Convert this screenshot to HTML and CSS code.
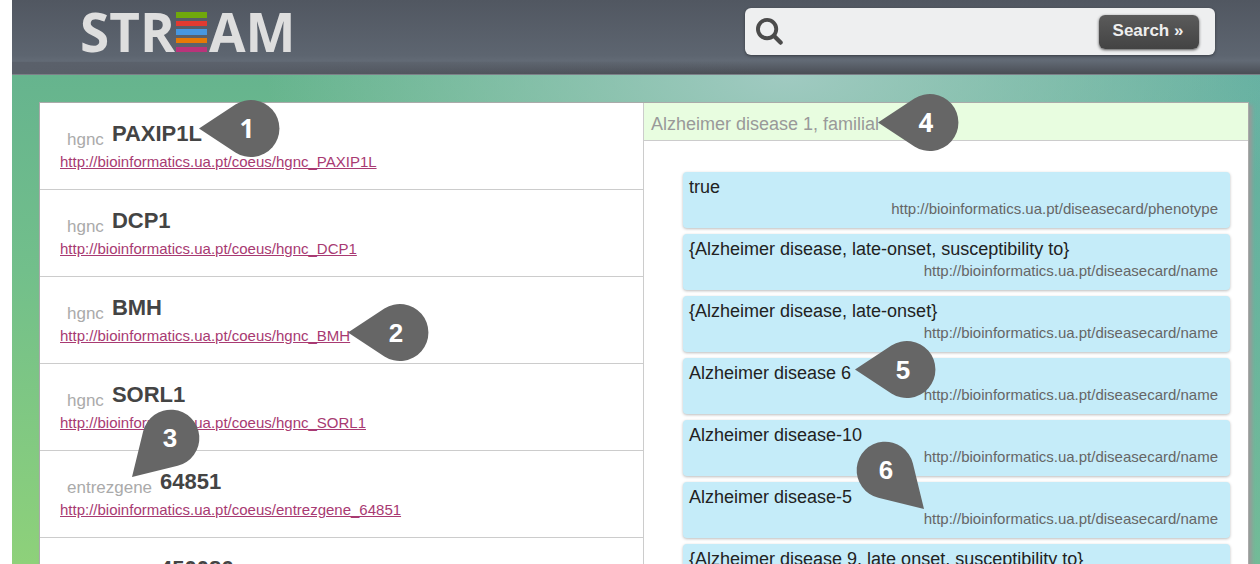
FILE: index.html
```html
<!DOCTYPE html>
<html lang="en">
<head>
<meta charset="utf-8">
<title>STREAM</title>
<link rel="stylesheet" href="styles.css">
</head>
<body>
<div class="page">
  <header class="topbar">
    <h1 class="logo" aria-label="STREAM">
      <span>STR</span>
      <svg class="logo-bars" viewBox="0 0 31 40" aria-hidden="true">
        <rect y="0" width="31" height="6" fill="#70a80c"/>
        <rect y="9" width="31" height="5" fill="#e23a31"/>
        <rect y="17" width="31" height="6" fill="#4797e0"/>
        <rect y="26" width="31" height="5" fill="#e67a06"/>
        <rect y="35" width="31" height="5" fill="#b9337a"/>
      </svg>
      <span>AM</span>
    </h1>
    <form class="search">
      <svg class="search-icon" viewBox="0 0 28 28" aria-hidden="true">
        <circle cx="11.500" cy="11.500" r="9.500" fill="none" stroke="#4b4b4b" stroke-width="4"/>
        <path d="M18.500 18.500L25.500 25.500" stroke="#4b4b4b" stroke-width="4.500" stroke-linecap="round"/>
      </svg>
      <input class="search-input" type="text" aria-label="Search">
      <button class="search-button" type="button">Search »</button>
    </form>
  </header>
  <main class="stage">
    <div class="panel">
      <ul class="genes">
        <li class="gene"><div class="gene-head"><span class="gene-type">hgnc</span><strong>PAXIP1L</strong></div><a href="#">http://bioinformatics.ua.pt/coeus/hgnc_PAXIP1L</a></li>
        <li class="gene"><div class="gene-head"><span class="gene-type">hgnc</span><strong>DCP1</strong></div><a href="#">http://bioinformatics.ua.pt/coeus/hgnc_DCP1</a></li>
        <li class="gene"><div class="gene-head"><span class="gene-type">hgnc</span><strong>BMH</strong></div><a href="#">http://bioinformatics.ua.pt/coeus/hgnc_BMH</a></li>
        <li class="gene"><div class="gene-head"><span class="gene-type">hgnc</span><strong>SORL1</strong></div><a href="#">http://bioinformatics.ua.pt/coeus/hgnc_SORL1</a></li>
        <li class="gene"><div class="gene-head"><span class="gene-type">entrezgene</span><strong>64851</strong></div><a href="#">http://bioinformatics.ua.pt/coeus/entrezgene_64851</a></li>
        <li class="gene"><div class="gene-head"><span class="gene-type">entrezgene</span><strong>450086</strong></div></li>
      </ul>
      <section class="details">
        <h2 class="details-title">Alzheimer disease 1, familial</h2>
        <ul class="cards">
          <li class="card"><span>true</span><span class="card-url">http://bioinformatics.ua.pt/diseasecard/phenotype</span></li>
          <li class="card"><span>{Alzheimer disease, late-onset, susceptibility to}</span><span class="card-url">http://bioinformatics.ua.pt/diseasecard/name</span></li>
          <li class="card"><span>{Alzheimer disease, late-onset}</span><span class="card-url">http://bioinformatics.ua.pt/diseasecard/name</span></li>
          <li class="card"><span>Alzheimer disease 6</span><span class="card-url">http://bioinformatics.ua.pt/diseasecard/name</span></li>
          <li class="card"><span>Alzheimer disease-10</span><span class="card-url">http://bioinformatics.ua.pt/diseasecard/name</span></li>
          <li class="card"><span>Alzheimer disease-5</span><span class="card-url">http://bioinformatics.ua.pt/diseasecard/name</span></li>
          <li class="card"><span>{Alzheimer disease 9, late onset, susceptibility to}</span></li>
        </ul>
      </section>
    </div>
  </main>
  <svg class="pin pin-1" viewBox="0 0 81 57"><path d="M0 28.500L36.400 4.600A28.500 28.500 0 1 1 36.400 52.400Z"/><text class="humanist" x="48" y="38">1</text></svg>
  <svg class="pin pin-2" viewBox="0 0 81 57"><path d="M0 28.500L36.400 4.600A28.500 28.500 0 1 1 36.400 52.400Z"/><text x="48" y="38">2</text></svg>
  <svg class="pin pin-3" viewBox="0 0 68 68"><path transform="translate(0 68) rotate(-45)" d="M0 0L40.200 -24.400A28.500 28.500 0 1 1 40.200 24.400Z"/><text x="38" y="38">3</text></svg>
  <svg class="pin pin-4" viewBox="0 0 81 57"><path d="M0 28.500L36.400 4.600A28.500 28.500 0 1 1 36.400 52.400Z"/><text class="humanist" x="48" y="38">4</text></svg>
  <svg class="pin pin-5" viewBox="0 0 81 57"><path d="M0 28.500L36.400 4.600A28.500 28.500 0 1 1 36.400 52.400Z"/><text x="48" y="38">5</text></svg>
  <svg class="pin pin-6" viewBox="0 0 68 68"><path transform="translate(68 68) rotate(-135)" d="M0 0L40.200 -24.400A28.500 28.500 0 1 1 40.200 24.400Z"/><text x="30" y="38">6</text></svg>
</div>
</body>
</html>
```
FILE: styles.css
```css
* { box-sizing: border-box; }

body {
  margin: 0;
  background: #fff;
  font-family: "Liberation Sans", Arial, sans-serif;
}

ul { margin: 0; padding: 0; list-style: none; }

.page {
  position: relative;
  display: flex;
  flex-direction: column;
  height: 100vh;
  padding-left: 12px;
  overflow: hidden;
}

.topbar {
  display: flex;
  flex: none;
  justify-content: space-between;
  align-items: flex-start;
  padding: 8px 45px 19px 68px;
  border-bottom: 1px solid #7c8088;
  background:
    linear-gradient(90deg, #5a606a, #5a606a00 60%) 0 100% / 100% 12px no-repeat,
    linear-gradient(#515761, #5d6570 75%, #626a75 82%, #4a4e55);
}

.logo {
  display: flex;
  align-items: center;
  margin: 0;
  color: #dedede;
  font: 700 53px/47px "Open Sans", sans-serif;
}

.logo-bars { width: 31px; height: 40px; margin: 0 2px 0 1px; }

.search {
  display: flex;
  align-items: center;
  width: 470px;
  height: 47px;
  padding: 0 16px 0 11px;
  border-radius: 6px;
  background: #eeeff0;
  box-shadow: 0 1px 3px #0006;
}

.search-icon { width: 27px; height: 27px; }

.search-input {
  flex: 1;
  min-width: 0;
  height: 32px;
  border: 0;
  background: transparent;
  font-size: 17px;
  outline: none;
}

.search-button {
  width: 100px;
  height: 34px;
  padding: 0 2px 2px 0;
  border: 0;
  border-radius: 6px;
  background: linear-gradient(#5b5b5b, #434343);
  box-shadow: 0 1px 3px #000a;
  color: #eee;
  font: bold 17px "Liberation Sans", Arial, sans-serif;
}

.stage {
  flex: 1;
  min-height: 0;
  padding: 27px 11px 0 27px;
  background:
    radial-gradient(ellipse 520px 240px at 62% 0, #a0cac1 0, #a0cac100 100%),
    linear-gradient(90deg, #60acab00 60%, #60acab99 100%),
    linear-gradient(#66b48e, #72bf8b 40%, #8ed17a);
}

.panel {
  display: grid;
  grid-template-columns: calc(50% - 1px) 1fr;
  border: 1px solid #aaa;
  background: #fff;
  box-shadow: 3px 3px 4px #999;
}

.gene {
  height: 87px;
  padding: 17px 20px 0;
  border-bottom: 1px solid #ccc;
}

.gene-head {
  display: flex;
  gap: 8px;
  padding-left: 7px;
  color: #444;
  font-size: 22px;
  line-height: 28px;
}

.gene-type {
  padding-top: 6px;
  color: #aaa;
  font-size: 17px;
}

.gene a {
  display: block;
  color: #a83a72;
  font-size: 15px;
  line-height: 16px;
}

.details { border-left: 1px solid #ccc; }

.details-title {
  margin: 0;
  padding: 6px 7px 1px;
  border-bottom: 1px solid #ccc;
  background: #e8fde0;
  color: #999;
  font-size: 18px;
  font-weight: normal;
  line-height: 30px;
}

.cards {
  display: flex;
  flex-direction: column;
  gap: 6px;
  padding: 31px 18px 0 39px;
}

.card {
  display: flex;
  flex-direction: column;
  height: 56px;
  padding: 5px 12px 0 6px;
  border-radius: 4px;
  background: #c5ecf9;
  box-shadow: 0 1px 3px #0004;
  color: #222;
  font-size: 18px;
  line-height: 21px;
}

.card-url {
  align-self: flex-end;
  color: #666;
  font-size: 15px;
}

.pin {
  position: absolute;
  width: 81px;
  height: 57px;
  fill: #666;
  overflow: visible;
}

.pin text {
  fill: #fff;
  font: bold 26px "Liberation Sans", Arial, sans-serif;
  text-anchor: middle;
}

.pin .humanist { font-family: "Open Sans", sans-serif; }

.pin-1 { left: 199px; top: 100px; }
.pin-2 { left: 348px; top: 304px; }
.pin-3 { left: 132px; top: 409px; width: 68px; height: 68px; }
.pin-4 { left: 878px; top: 94px; }
.pin-5 { left: 855px; top: 341px; }
.pin-6 { left: 856px; top: 441px; width: 68px; height: 68px; }
```
